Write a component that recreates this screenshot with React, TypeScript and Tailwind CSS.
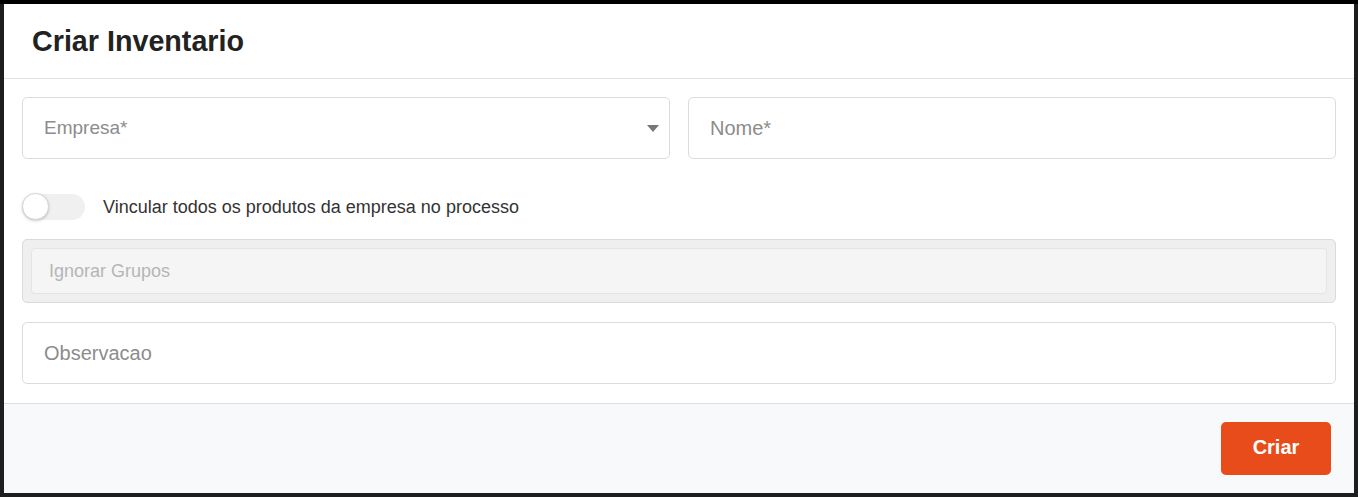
import React from "react";

export default function App() {
  return (
    <div className="w-[1358px] h-[497px] bg-[#1e1e1e] border-t-[4px] border-black px-[4px] pb-[4px] font-['Liberation_Sans',Arial,sans-serif]">
      <div className="w-full h-full bg-white flex flex-col">
        <div className="h-[75px] border-b border-[#e2e2e2] flex items-center pl-[28px] shrink-0">
          <h1 className="text-[28.7px] font-bold text-[#222] leading-none mt-[1px]">Criar Inventario</h1>
        </div>
        <div className="px-[18px] pt-[18px] pb-[19px] flex flex-col shrink-0">
          <div className="grid grid-cols-2 gap-[18px]">
            <div className="h-[62px] border border-[#dcdcdc] rounded-[5px] flex items-center justify-between pl-[21px] pr-[9px]">
              <span className="text-[19px] text-[#8c8c8c]">Empresa*</span>
              <svg width="12" height="7" viewBox="0 0 12 7" className="mr-[1px]">
                <path d="M0 0 L12 0 L6 7 Z" fill="#777" />
              </svg>
            </div>
            <div className="h-[62px] border border-[#dcdcdc] rounded-[5px] flex items-center pl-[21px]">
              <span className="text-[20px] text-[#8c8c8c]">Nome*</span>
            </div>
          </div>
          <div className="mt-[34px] h-[27px] flex items-center">
            <div className="relative w-[63px] h-[26px] rounded-full bg-[#f0f0f0]">
              <div className="absolute left-0 top-[-0.5px] w-[27px] h-[27px] rounded-full bg-white border border-[#d4d4d4] shadow-[0_1px_3px_rgba(0,0,0,0.2)]" />
            </div>
            <span className="ml-[18px] text-[18px] text-[#333] mt-[1px]">Vincular todos os produtos da empresa no processo</span>
          </div>
          <div className="mt-[19px] h-[64px] rounded-[5px] border border-[#dadada] bg-[#efefef] p-[8px]">
            <div className="h-full rounded-[4px] border border-[#e4e4e4] bg-[#f5f5f5] flex items-center pl-[17px]">
              <span className="text-[18px] text-[#b5b5b5]">Ignorar Grupos</span>
            </div>
          </div>
          <div className="mt-[19px] h-[62px] border border-[#dcdcdc] rounded-[5px] flex items-center pl-[21px]">
            <span className="text-[20px] text-[#8c8c8c]">Observacao</span>
          </div>
        </div>
        <div className="flex-1 border-t border-[#dedede] bg-[#f8f9fa] flex justify-end items-start pt-[18px] pr-[23px]">
          <button className="w-[110px] h-[53px] rounded-[5px] bg-[#e84c1b] text-white text-[20px] font-bold pb-[3px]">Criar</button>
        </div>
      </div>
    </div>
  );
}
